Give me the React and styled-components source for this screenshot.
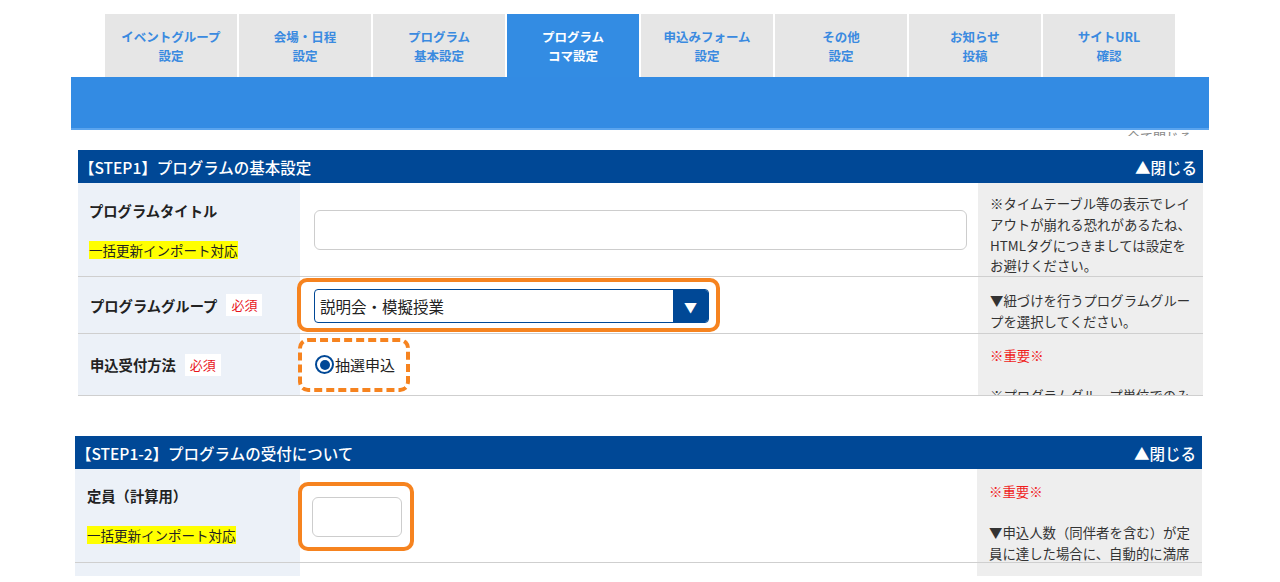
import React from 'react';
import styled, { createGlobalStyle } from 'styled-components';

const GlobalStyle = createGlobalStyle`
  html, body {
    margin: 0;
    padding: 0;
    background: #fff;
    overflow: hidden;
  }
  body {
    font-family: "Noto Sans CJK JP", "Noto Sans", sans-serif;
    color: #222;
  }
`;

const tabs = [
  ['イベントグループ', '設定'],
  ['会場・日程', '設定'],
  ['プログラム', '基本設定'],
  ['プログラム', 'コマ設定'],
  ['申込みフォーム', '設定'],
  ['その他', '設定'],
  ['お知らせ', '投稿'],
  ['サイトURL', '確認'],
];

const Page = styled.div`
  width: 1280px;
  height: 582px;
  overflow: hidden;
`;

const Nav = styled.nav`
  margin: 14px 0 0 71px;
  width: 1138px;
`;

const TabRow = styled.div`
  display: flex;
  gap: 2px;
  padding-left: 34px;
`;

const Tab = styled.div`
  width: 132px;
  height: 63px;
  display: flex;
  flex-direction: column;
  align-items: center;
  justify-content: center;
  font-size: 12.5px;
  font-weight: 700;
  line-height: 19px;
  background: ${(p) => (p.$active ? '#338ce3' : '#e6e6e6')};
  color: ${(p) => (p.$active ? '#fff' : '#3a8ae0')};
`;

const Bar = styled.div`
  height: 51px;
  background: #338be3;
  border-bottom: 2px solid #5aa4ee;
`;

const Strip = styled.div`
  margin-left: 71px;
  width: 1121px;
  height: 6px;
  overflow: hidden;
  text-align: right;
  font-size: 13px;
  color: #8a8a8a;
  line-height: 13px;

  span {
    display: inline-block;
    margin-top: -9px;
  }
`;

const Clip = styled.div`
  margin-left: ${(p) => p.$left}px;
  margin-top: ${(p) => p.$top}px;
  width: ${(p) => p.$width}px;
  height: ${(p) => p.$height}px;
  overflow: hidden;
`;

const Header = styled.div`
  height: 33px;
  background: #004896;
  color: #fff;
  display: flex;
  align-items: center;
  justify-content: space-between;
  padding: 0 6px 0 1px;
  font-size: 15.5px;
  font-weight: 500;
`;

const Row = styled.div`
  display: grid;
  grid-template-columns: ${(p) => p.$labelWidth}px 1fr 225px;
  height: ${(p) => p.$h}px;
  border-bottom: 1px solid #cfcfcf;
`;

const Label = styled.div`
  background: #ecf1f8;
  padding: ${(p) => p.$pad || '0 12px'};
  display: flex;
  flex-direction: column;
  justify-content: ${(p) => (p.$stack ? 'flex-start' : 'center')};
  gap: ${(p) => (p.$stack ? '20px' : '0')};
`;

const LabelText = styled.div`
  display: flex;
  align-items: center;
  gap: 9px;
  font-size: 14.3px;
  font-weight: 700;
  color: #222;
`;

const Required = styled.span`
  background: #fff;
  color: #e8141b;
  font-size: 13px;
  font-weight: 400;
  padding: 1px 5px;
  line-height: 20px;
`;

const Marker = styled.span`
  align-self: flex-start;
  background: #ffff00;
  font-size: 13.5px;
  line-height: 18px;
  color: #222;
`;

const Field = styled.div`
  background: #fff;
  display: flex;
  align-items: ${(p) => p.$align || 'center'};
  padding-left: 14px;
  padding-right: 10px;
`;

const TextInput = styled.div`
  box-sizing: border-box;
  width: ${(p) => p.$w}px;
  height: 40px;
  border: 1px solid #cdcdcd;
  border-radius: 6px;
  background: #fff;
`;

const Highlight = styled.div`
  border: 4px ${(p) => (p.$dashed ? 'dashed' : 'solid')} #f6831f;
  border-radius: 10px;
  padding: ${(p) => p.$pad};
  margin: ${(p) => p.$margin || '0'};
  display: flex;
  align-items: center;
`;

const Select = styled.div`
  box-sizing: border-box;
  width: 395px;
  height: 34px;
  border: 1px solid #004896;
  border-radius: 4px;
  display: flex;
  align-items: center;
  overflow: hidden;
`;

const SelectValue = styled.div`
  flex: 1;
  padding-left: 5px;
  font-size: 15.5px;
  color: #222;
`;

const SelectArrow = styled.div`
  width: 35px;
  height: 100%;
  background: #004896;
  color: #fff;
  font-size: 13px;
  display: flex;
  align-items: center;
  justify-content: center;
`;

const Radio = styled.span`
  box-sizing: border-box;
  width: 19px;
  height: 19px;
  border-radius: 50%;
  border: 2px solid #004896;
  display: inline-flex;
  align-items: center;
  justify-content: center;

  &::after {
    content: '';
    width: 10px;
    height: 10px;
    border-radius: 50%;
    background: #004896;
  }
`;

const RadioText = styled.span`
  font-size: 15px;
  color: #222;
  margin-left: 1px;
`;

const Note = styled.div`
  background: #eeeeee;
  padding: ${(p) => p.$pad || '10px 8px 0 12px'};
  font-size: 13.4px;
  line-height: 20.8px;
  color: #333;
  overflow: hidden;
`;

const Important = styled.div`
  color: #f01d1d;
  margin-bottom: ${(p) => p.$gap}px;
`;

const App = () => (
  <Page>
    <GlobalStyle />
    <Nav>
      <TabRow>
        {tabs.map(([a, b], i) => (
          <Tab key={i} $active={i === 3}>
            <span>{a}</span>
            <span>{b}</span>
          </Tab>
        ))}
      </TabRow>
      <Bar />
    </Nav>
    <Strip>
      <span>全て閉じる</span>
    </Strip>

    <Clip $left={78} $top={14} $width={1125} $height={248}>
      <Header>
        <span>【STEP1】プログラムの基本設定</span>
        <span>▲閉じる</span>
      </Header>
      <Row $labelWidth={222} $h={93}>
        <Label $stack $pad="17px 12px 0 11px">
          <LabelText>プログラムタイトル</LabelText>
          <Marker>一括更新インポート対応</Marker>
        </Label>
        <Field>
          <TextInput $w={653} />
        </Field>
        <Note $pad="10px 8px 0 12px">
          ※タイムテーブル等の表示でレイアウトが崩れる恐れがあるたね、HTMLタグにつきましては設定をお避けください。
        </Note>
      </Row>
      <Row $labelWidth={222} $h={56}>
        <Label>
          <LabelText>
            プログラムグループ<Required>必須</Required>
          </LabelText>
        </Label>
        <Field>
          <Highlight $pad="7px 7px 5px 13px" $margin="0 0 0 -17px">
            <Select>
              <SelectValue>説明会・模擬授業</SelectValue>
              <SelectArrow>▼</SelectArrow>
            </Select>
          </Highlight>
        </Field>
        <Note $pad="13px 8px 0 12px">▼紐づけを行うプログラムグループを選択してください。</Note>
      </Row>
      <Row $labelWidth={222} $h={61}>
        <Label>
          <LabelText>
            申込受付方法<Required>必須</Required>
          </LabelText>
        </Label>
        <Field $align="flex-start">
          <Highlight $dashed $pad="12px 11px 13px 13px" $margin="4px 0 0 -16px">
            <Radio />
            <RadioText>抽選申込</RadioText>
          </Highlight>
        </Field>
        <Note $pad="11px 8px 0 12px">
          <Important $gap={19}>※重要※</Important>
          ※プログラムグループ単位でのみ
        </Note>
      </Row>
    </Clip>

    <Clip $left={75} $top={38} $width={1127} $height={140}>
      <Header>
        <span>【STEP1-2】プログラムの受付について</span>
        <span>▲閉じる</span>
      </Header>
      <Row $labelWidth={225} $h={93}>
        <Label $stack $pad="16px 12px 0 12px">
          <LabelText>定員（計算用）</LabelText>
          <Marker>一括更新インポート対応</Marker>
        </Label>
        <Field $align="flex-start">
          <Highlight $pad="11px 8px 10px 10px" $margin="13px 0 0 -16px">
            <TextInput $w={90} />
          </Highlight>
        </Field>
        <Note $pad="12px 8px 0 12px">
          <Important $gap={20}>※重要※</Important>
          ▼申込人数（同伴者を含む）が定員に達した場合に、自動的に満席
        </Note>
      </Row>
      <Row $labelWidth={225} $h={30}>
        <Label />
        <Field />
        <Note />
      </Row>
    </Clip>
  </Page>
);

export default App;
